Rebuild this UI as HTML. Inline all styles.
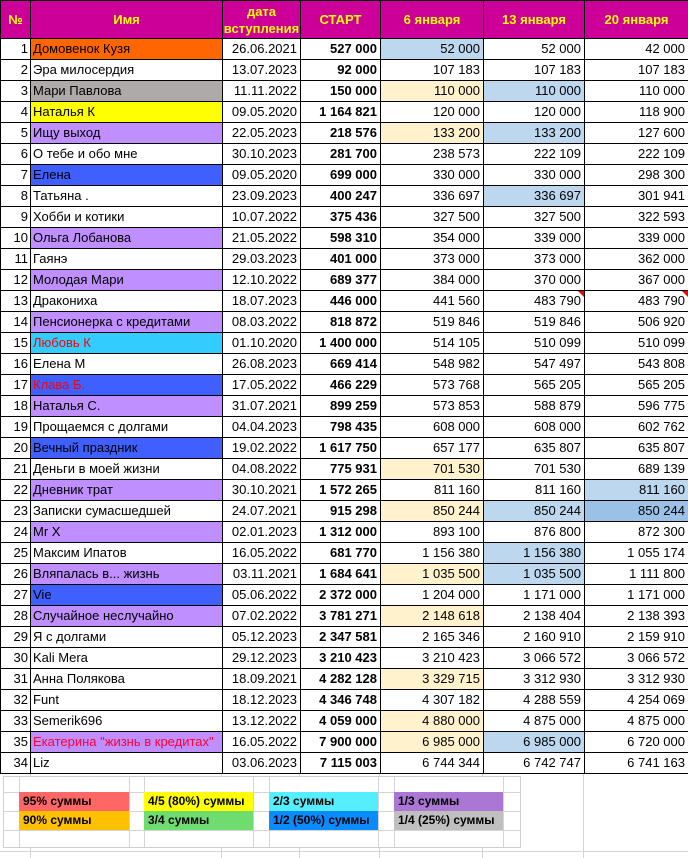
<!DOCTYPE html>
<html><head><meta charset="utf-8"><style>
body{margin:0;background:#fff;width:688px;height:858px;overflow:hidden;position:relative;font-family:"Liberation Sans",sans-serif;}
table{border-collapse:collapse;table-layout:fixed;width:688px;position:absolute;left:0;top:0;}
td{border:1px solid #000;height:20px;padding:0 3px;font-size:13px;white-space:nowrap;overflow:hidden;text-align:right;line-height:20px;position:relative;}
td.n{padding:0 2px 0 0}
td.nm{text-align:left;padding-left:2px}
th{background:#cc0099;color:#ffff00;font-weight:bold;font-size:13px;border:1px solid #000;height:37px;line-height:17px;padding:0}
td.b{font-weight:bold}
.P{background:#fff2cc}.B{background:#bdd7ee}.D{background:#9bc2e6}
.L{background:#bf8fff}.BL{background:#3f5fff}.O{background:#ff6600}.G{background:#aeaaaa}.Y{background:#ffff00}.C{background:#33ccff}
.r{color:#ff0000}
.tri::after{content:"";position:absolute;right:0;top:0;border-top:6px solid #e00;border-left:6px solid transparent}
.lg{position:absolute;font-size:12px;font-weight:bold;line-height:19px;padding-left:4px;box-sizing:border-box}
.gl{position:absolute;background:#d4d4d4}
</style></head><body>
<div class="gl" style="left:30px;top:774px;width:1px;height:84px"></div>
<div class="gl" style="left:221px;top:774px;width:1px;height:84px"></div>
<div class="gl" style="left:299px;top:774px;width:1px;height:84px"></div>
<div class="gl" style="left:379px;top:774px;width:1px;height:84px"></div>
<div class="gl" style="left:482px;top:774px;width:1px;height:84px"></div>
<div class="gl" style="left:583px;top:774px;width:1px;height:84px"></div>
<div class="gl" style="left:0;top:851px;width:688px;height:1px"></div>
<div style="position:absolute;left:3px;top:776px;width:516px;height:70px;background:#fff;border:1px solid #d0d0d0"></div>
<div class="gl" style="left:19px;top:776px;width:1px;height:71px"></div>
<div class="gl" style="left:129px;top:776px;width:1px;height:71px"></div>
<div class="gl" style="left:144px;top:776px;width:1px;height:71px"></div>
<div class="gl" style="left:253px;top:776px;width:1px;height:71px"></div>
<div class="gl" style="left:269px;top:776px;width:1px;height:71px"></div>
<div class="gl" style="left:378px;top:776px;width:1px;height:71px"></div>
<div class="gl" style="left:394px;top:776px;width:1px;height:71px"></div>
<div class="gl" style="left:503px;top:776px;width:1px;height:71px"></div>
<div class="gl" style="left:3px;top:792px;width:517px;height:1px"></div>
<div class="gl" style="left:3px;top:811px;width:517px;height:1px"></div>
<div class="gl" style="left:3px;top:830px;width:517px;height:1px"></div>
<div class="lg" style="left:19px;top:792px;width:110px;height:19px;background:#ff6666">95% суммы</div>
<div class="lg" style="left:19px;top:811px;width:110px;height:19px;background:#ffc000">90% суммы</div>
<div class="lg" style="left:144px;top:792px;width:109px;height:19px;background:#ffff00">4/5 (80%) суммы</div>
<div class="lg" style="left:144px;top:811px;width:109px;height:19px;background:#6fdc6f">3/4 суммы</div>
<div class="lg" style="left:269px;top:792px;width:109px;height:19px;background:#55eeff">2/3 суммы</div>
<div class="lg" style="left:269px;top:811px;width:109px;height:19px;background:#0a8cff">1/2 (50%) суммы</div>
<div class="lg" style="left:394px;top:792px;width:109px;height:19px;background:#aa77d4">1/3 суммы</div>
<div class="lg" style="left:394px;top:811px;width:109px;height:19px;background:#bfbfbf">1/4 (25%) суммы</div>
<table>
<colgroup><col style="width:30px"><col style="width:192px"><col style="width:78px"><col style="width:80px"><col style="width:103px"><col style="width:101px"><col style="width:104px"></colgroup>
<tr><th>№</th><th>Имя</th><th>дата<br>вступления</th><th>СТАРТ</th><th>6 января</th><th>13 января</th><th>20 января</th></tr>
<tr><td class="n">1</td><td class="nm O">Домовенок Кузя</td><td>26.06.2021</td><td class="b">527 000</td><td class="B">52 000</td><td>52 000</td><td>42 000</td></tr>
<tr><td class="n">2</td><td class="nm">Эра милосердия</td><td>13.07.2023</td><td class="b">92 000</td><td>107 183</td><td>107 183</td><td>107 183</td></tr>
<tr><td class="n">3</td><td class="nm G">Мари Павлова</td><td>11.11.2022</td><td class="b">150 000</td><td class="P">110 000</td><td class="B">110 000</td><td>110 000</td></tr>
<tr><td class="n">4</td><td class="nm Y">Наталья К</td><td>09.05.2020</td><td class="b">1 164 821</td><td>120 000</td><td>120 000</td><td>118 900</td></tr>
<tr><td class="n">5</td><td class="nm L">Ищу выход</td><td>22.05.2023</td><td class="b">218 576</td><td class="P">133 200</td><td class="B">133 200</td><td>127 600</td></tr>
<tr><td class="n">6</td><td class="nm">О тебе и обо мне</td><td>30.10.2023</td><td class="b">281 700</td><td>238 573</td><td>222 109</td><td>222 109</td></tr>
<tr><td class="n">7</td><td class="nm BL">Елена</td><td>09.05.2020</td><td class="b">699 000</td><td>330 000</td><td>330 000</td><td>298 300</td></tr>
<tr><td class="n">8</td><td class="nm">Татьяна .</td><td>23.09.2023</td><td class="b">400 247</td><td>336 697</td><td class="B">336 697</td><td>301 941</td></tr>
<tr><td class="n">9</td><td class="nm">Хобби и котики</td><td>10.07.2022</td><td class="b">375 436</td><td>327 500</td><td>327 500</td><td>322 593</td></tr>
<tr><td class="n">10</td><td class="nm L">Ольга Лобанова</td><td>21.05.2022</td><td class="b">598 310</td><td>354 000</td><td>339 000</td><td>339 000</td></tr>
<tr><td class="n">11</td><td class="nm">Гаянэ</td><td>29.03.2023</td><td class="b">401 000</td><td>373 000</td><td>373 000</td><td>362 000</td></tr>
<tr><td class="n">12</td><td class="nm L">Молодая Мари</td><td>12.10.2022</td><td class="b">689 377</td><td>384 000</td><td>370 000</td><td>367 000</td></tr>
<tr><td class="n">13</td><td class="nm">Дракониха</td><td>18.07.2023</td><td class="b">446 000</td><td>441 560</td><td class="tri">483 790</td><td class="tri">483 790</td></tr>
<tr><td class="n">14</td><td class="nm L">Пенсионерка с кредитами</td><td>08.03.2022</td><td class="b">818 872</td><td>519 846</td><td>519 846</td><td>506 920</td></tr>
<tr><td class="n">15</td><td class="nm C r">Любовь К</td><td>01.10.2020</td><td class="b">1 400 000</td><td>514 105</td><td>510 099</td><td>510 099</td></tr>
<tr><td class="n">16</td><td class="nm">Елена М</td><td>26.08.2023</td><td class="b">669 414</td><td>548 982</td><td>547 497</td><td>543 808</td></tr>
<tr><td class="n">17</td><td class="nm BL r">Клава Б.</td><td>17.05.2022</td><td class="b">466 229</td><td>573 768</td><td>565 205</td><td>565 205</td></tr>
<tr><td class="n">18</td><td class="nm L">Наталья С.</td><td>31.07.2021</td><td class="b">899 259</td><td>573 853</td><td>588 879</td><td>596 775</td></tr>
<tr><td class="n">19</td><td class="nm">Прощаемся с долгами</td><td>04.04.2023</td><td class="b">798 435</td><td>608 000</td><td>608 000</td><td>602 762</td></tr>
<tr><td class="n">20</td><td class="nm BL">Вечный праздник</td><td>19.02.2022</td><td class="b">1 617 750</td><td>657 177</td><td>635 807</td><td>635 807</td></tr>
<tr><td class="n">21</td><td class="nm">Деньги в моей жизни</td><td>04.08.2022</td><td class="b">775 931</td><td class="P">701 530</td><td>701 530</td><td>689 139</td></tr>
<tr><td class="n">22</td><td class="nm L">Дневник трат</td><td>30.10.2021</td><td class="b">1 572 265</td><td>811 160</td><td>811 160</td><td class="B">811 160</td></tr>
<tr><td class="n">23</td><td class="nm">Записки сумасшедшей</td><td>24.07.2021</td><td class="b">915 298</td><td class="P">850 244</td><td class="B">850 244</td><td class="D">850 244</td></tr>
<tr><td class="n">24</td><td class="nm L">Mr X</td><td>02.01.2023</td><td class="b">1 312 000</td><td>893 100</td><td>876 800</td><td>872 300</td></tr>
<tr><td class="n">25</td><td class="nm">Максим Ипатов</td><td>16.05.2022</td><td class="b">681 770</td><td>1 156 380</td><td class="B">1 156 380</td><td>1 055 174</td></tr>
<tr><td class="n">26</td><td class="nm L">Вляпалась в... жизнь</td><td>03.11.2021</td><td class="b">1 684 641</td><td class="P">1 035 500</td><td class="B">1 035 500</td><td>1 111 800</td></tr>
<tr><td class="n">27</td><td class="nm BL">Vie</td><td>05.06.2022</td><td class="b">2 372 000</td><td>1 204 000</td><td>1 171 000</td><td>1 171 000</td></tr>
<tr><td class="n">28</td><td class="nm L">Случайное неслучайно</td><td>07.02.2022</td><td class="b">3 781 271</td><td class="P">2 148 618</td><td>2 138 404</td><td>2 138 393</td></tr>
<tr><td class="n">29</td><td class="nm">Я с долгами</td><td>05.12.2023</td><td class="b">2 347 581</td><td>2 165 346</td><td>2 160 910</td><td>2 159 910</td></tr>
<tr><td class="n">30</td><td class="nm">Kali Mera</td><td>29.12.2023</td><td class="b">3 210 423</td><td>3 210 423</td><td>3 066 572</td><td>3 066 572</td></tr>
<tr><td class="n">31</td><td class="nm">Анна Полякова</td><td>18.09.2021</td><td class="b">4 282 128</td><td class="P">3 329 715</td><td>3 312 930</td><td>3 312 930</td></tr>
<tr><td class="n">32</td><td class="nm">Funt</td><td>18.12.2023</td><td class="b">4 346 748</td><td>4 307 182</td><td>4 288 559</td><td>4 254 069</td></tr>
<tr><td class="n">33</td><td class="nm">Semerik696</td><td>13.12.2022</td><td class="b">4 059 000</td><td class="P">4 880 000</td><td>4 875 000</td><td>4 875 000</td></tr>
<tr><td class="n">35</td><td class="nm L" style="color:#ff0033">Екатерина "жизнь в кредитах"</td><td>16.05.2022</td><td class="b">7 900 000</td><td class="P">6 985 000</td><td class="B">6 985 000</td><td>6 720 000</td></tr>
<tr><td class="n">34</td><td class="nm">Liz</td><td>03.06.2023</td><td class="b">7 115 003</td><td>6 744 344</td><td>6 742 747</td><td>6 741 163</td></tr>
</table>
</body></html>
